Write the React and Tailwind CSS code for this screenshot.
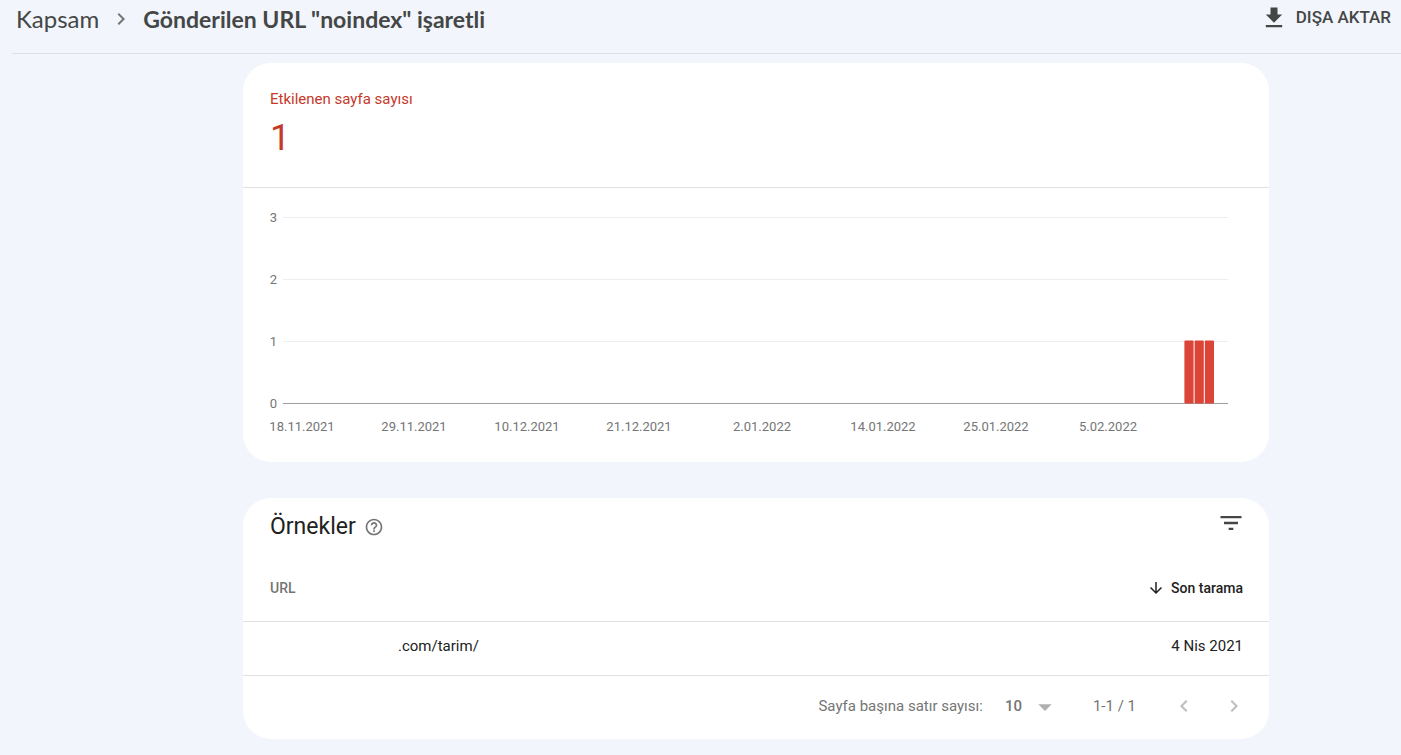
import { useState } from 'react'

const icons = {
  download: 'M19 9h-4V3H9v6H5l7 7 7-7zM5 18v2h14v-2H5z',
  chevronRight: 'M10 6 8.59 7.41 13.17 12l-4.58 4.59L10 18l6-6z',
  chevronLeft: 'M15.41 7.41 14 6l-6 6 6 6 1.41-1.41L10.83 12z',
  filter: 'M10 18h4v-2h-4v2zM3 6v2h18V6H3zm3 7h12v-2H6v2z',
  help: 'M11 18h2v-2h-2v2zm1-16C6.48 2 2 6.48 2 12s4.48 10 10 10 10-4.48 10-10S17.52 2 12 2zm0 18c-4.41 0-8-3.59-8-8s3.59-8 8-8 8 3.59 8 8-3.59 8-8 8zm0-14c-2.21 0-4 1.79-4 4h2c0-1.1.9-2 2-2s2 .9 2 2c0 2-3 1.75-3 5h2c0-2.25 3-2.5 3-5 0-2.21-1.79-4-4-4z',
  arrowDown: 'M20 12l-1.41-1.41L13 16.17V4h-2v12.17l-5.58-5.59L4 12l8 8 8-8z',
  dropDown: 'M7 10l5 5 5-5z',
}

function Icon({ name, className }) {
  return (
    <svg viewBox="0 0 24 24" fill="currentColor" aria-hidden="true" className={className}>
      <path d={icons[name]} />
    </svg>
  )
}

const yTicks = [3, 2, 1, 0]
const dates = [
  { label: '18.11.2021', x: 59 },
  { label: '29.11.2021', x: 171 },
  { label: '10.12.2021', x: 284 },
  { label: '21.12.2021', x: 396 },
  { label: '2.01.2022', x: 519 },
  { label: '14.01.2022', x: 640 },
  { label: '25.01.2022', x: 753 },
  { label: '5.02.2022', x: 865 },
]
const bars = [
  { x: 941.4, value: 1 },
  { x: 951.6, value: 1 },
  { x: 961.8, value: 1 },
]

const step = 62
const baseline = 215.5

function Chart() {
  return (
    <svg viewBox="0 0 1026 274" role="img" aria-label="Etkilenen sayfa sayısı" className="block h-auto w-full">
      {yTicks.map(t => (
        <g key={t}>
          <line x1="40" x2="985" y1={baseline - t * step} y2={baseline - t * step} stroke={t === 0 ? '#9e9e9e' : '#eeeeee'} />
          <text x="34" y={baseline - t * step + 4} textAnchor="end" className="fill-[#757575] text-[13px]">{t}</text>
        </g>
      ))}
      {bars.map(b => (
        <rect key={b.x} x={b.x} y={baseline - b.value * step - 1} width="9.2" height={b.value * step + 1} rx="1" fill="#db4437" />
      ))}
      {dates.map(d => (
        <text key={d.label} x={d.x} y="243" textAnchor="middle" className="fill-[#757575] text-[13px]">{d.label}</text>
      ))}
    </svg>
  )
}

export default function App() {
  const [rows, setRows] = useState('10')

  return (
    <div className="min-h-screen bg-[#f2f5fc] pb-4 font-['Roboto',sans-serif] text-[#212121]">
      <header className="ml-3 flex h-[54px] items-start justify-between border-b border-[#e0e0e0] pl-1 pr-2.5 text-[#444746]">
        <nav className="flex h-[38px] items-center font-['Lato','Roboto',sans-serif]">
          <a href="#kapsam" className="text-2xl">Kapsam</a>
          <Icon name="chevronRight" className="mx-2.5 size-6 text-[#757575]" />
          <h1 className="text-[23px] font-bold">Gönderilen URL "noindex" işaretli</h1>
        </nav>
        <button type="button" className="flex h-9 items-center gap-2 text-[17px] font-medium">
          <Icon name="download" className="size-7" />
          DIŞA AKTAR
        </button>
      </header>

      <main className="pl-[111px] pt-[9px]">
        <div className="mx-auto flex max-w-[1026px] flex-col gap-9">
          <section className="overflow-hidden rounded-[28px] bg-white">
            <div className="h-[125px] border-b border-[#e0e0e0] px-[27px] pt-[26px] text-[#c53929]">
              <h2 className="text-[15px] leading-5">Etkilenen sayfa sayısı</h2>
              <p className="mt-2 text-[36px] leading-[42px]">1</p>
            </div>
            <Chart />
          </section>

          <section className="overflow-hidden rounded-[28px] bg-white">
            <div className="flex h-[58px] items-center justify-between pl-[27px] pr-6">
              <div className="flex items-center gap-2">
                <h2 className="text-[23px]">Örnekler</h2>
                <button type="button" aria-label="Yardım" className="text-[#757575]">
                  <Icon name="help" className="size-5" />
                </button>
              </div>
              <button type="button" aria-label="Filtrele" className="mb-2 text-[#444746]">
                <Icon name="filter" className="size-7" />
              </button>
            </div>

            <table className="w-full">
              <thead>
                <tr className="h-[65px] border-b border-[#e0e0e0] text-sm">
                  <th scope="col" className="pl-[27px] text-left font-medium text-[#757575]">URL</th>
                  <th scope="col" className="pr-[26px] font-medium">
                    <button type="button" className="ml-auto flex items-center gap-1.5">
                      <Icon name="arrowDown" className="size-[18px]" />
                      Son tarama
                    </button>
                  </th>
                </tr>
              </thead>
              <tbody>
                <tr className="h-[54px] border-b border-[#e0e0e0] text-[15px]">
                  <td className="pb-1 pl-[155px]">.com/tarim/</td>
                  <td className="pb-1 pr-[26px] text-right">4 Nis 2021</td>
                </tr>
              </tbody>
            </table>

            <div className="flex h-[63px] items-center justify-end pb-0.5 pr-[23px] text-[15px] text-[#757575]">
              <label htmlFor="rows">Sayfa başına satır sayısı:</label>
              <div className="relative ml-[22px]">
                <select id="rows" value={rows} onChange={e => setRows(e.target.value)}
                  className="w-14 appearance-none bg-transparent font-medium outline-none">
                  <option>10</option>
                  <option>25</option>
                  <option>50</option>
                </select>
                <Icon name="dropDown" className="pointer-events-none absolute -top-1 right-0 size-8 text-[#b0b0b0]" />
              </div>
              <span className="ml-8">1-1 / 1</span>
              <button type="button" disabled aria-label="Önceki sayfa" className="ml-9 text-[#bdbdbd]">
                <Icon name="chevronLeft" className="size-6" />
              </button>
              <button type="button" disabled aria-label="Sonraki sayfa" className="ml-[26px] text-[#bdbdbd]">
                <Icon name="chevronRight" className="size-6" />
              </button>
            </div>
          </section>
        </div>
      </main>
    </div>
  )
}
